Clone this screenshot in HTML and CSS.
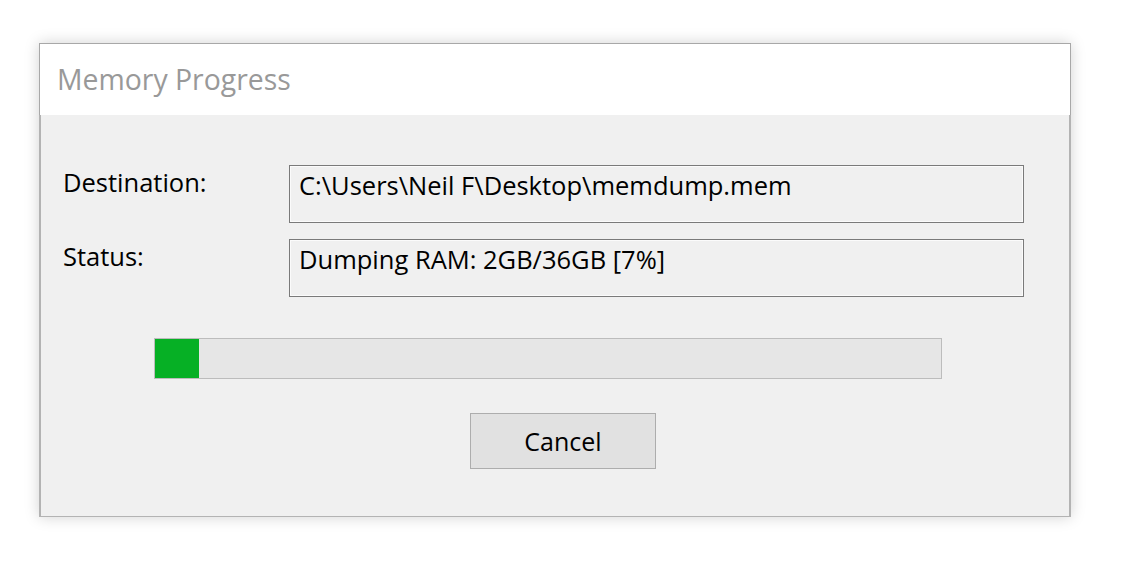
FILE: index.html
```html
<!DOCTYPE html>
<html>
<head>
<meta charset="utf-8">
<link rel="stylesheet" href="styles.css">
</head>
<body>
<div class="window">
  <div class="titlebar">Memory Progress</div>
  <div class="content">
    <div class="rows">
      <div class="label">Destination:</div>
      <div class="field">C:\Users\Neil F\Desktop\memdump.mem</div>
      <div class="label">Status:</div>
      <div class="field">Dumping RAM: 2GB/36GB [7%]</div>
    </div>
    <div class="progress"><div class="fill" style="width:44px"></div></div>
    <div class="actions"><button class="btn">Cancel</button></div>
  </div>
</div>
</body>
</html>
```
FILE: styles.css
```css
html, body {
  margin: 0;
  padding: 0;
  background: #ffffff;
}
body {
  font-family: "Open Sans", "Noto Sans", "Liberation Sans", sans-serif;
  padding: 43px 0 0 39px;
  height: 561px;
  box-sizing: border-box;
  overflow: hidden;
}
.window {
  width: 1032px;
  height: 474px;
  box-sizing: border-box;
  border: 1px solid #a8a8a8;
  box-shadow: 0 0 14px rgba(0,0,0,0.18);
  display: flex;
  flex-direction: column;
  background: #ffffff;
}
.titlebar {
  height: 71px;
  box-sizing: border-box;
  padding: 17px 0 0 17px;
  font-size: 28.4px;
  color: #999999;
  line-height: 36px;
  flex: none;
  white-space: nowrap;
}
.content {
  flex: 1;
  background: #f0f0f0;
  border-left: 2px solid #b3b3b3;
  border-right: 2px solid #b3b3b3;
  border-bottom: 1px solid #b3b3b3;
  margin: 0 -1px -1px -1px;
  padding: 50px 0 0 0;
  display: flex;
  flex-direction: column;
}
.rows {
  display: grid;
  grid-template-columns: 226px 735px;
  row-gap: 16px;
  padding-left: 22px;
}
.label {
  font-size: 25.5px;
  color: #000;
  line-height: 32px;
  padding-top: 1px;
  white-space: nowrap;
}
.field {
  height: 58px;
  box-sizing: border-box;
  border: 1px solid #7a7a7a;
  box-shadow: inset 0 0 0 1px #fbfbfb;
  padding: 3px 0 0 9px;
  font-size: 25.5px;
  line-height: 32px;
  color: #000;
  white-space: nowrap;
}
.progress {
  margin: 41px 0 0 113px;
  width: 788px;
  height: 41px;
  box-sizing: border-box;
  border: 1px solid #bcbcbc;
  background: #e6e6e6;
}
.fill {
  height: 100%;
  background: #06b025;
}
.actions {
  margin: 34px 0 0 429px;
}
.btn {
  width: 186px;
  height: 56px;
  box-sizing: border-box;
  border: 1px solid #adadad;
  background: #e1e1e1;
  font-family: "Open Sans", "Noto Sans", "Liberation Sans", sans-serif;
  font-size: 25px;
  color: #000;
  padding: 0;
  border-radius: 0;
}
```
